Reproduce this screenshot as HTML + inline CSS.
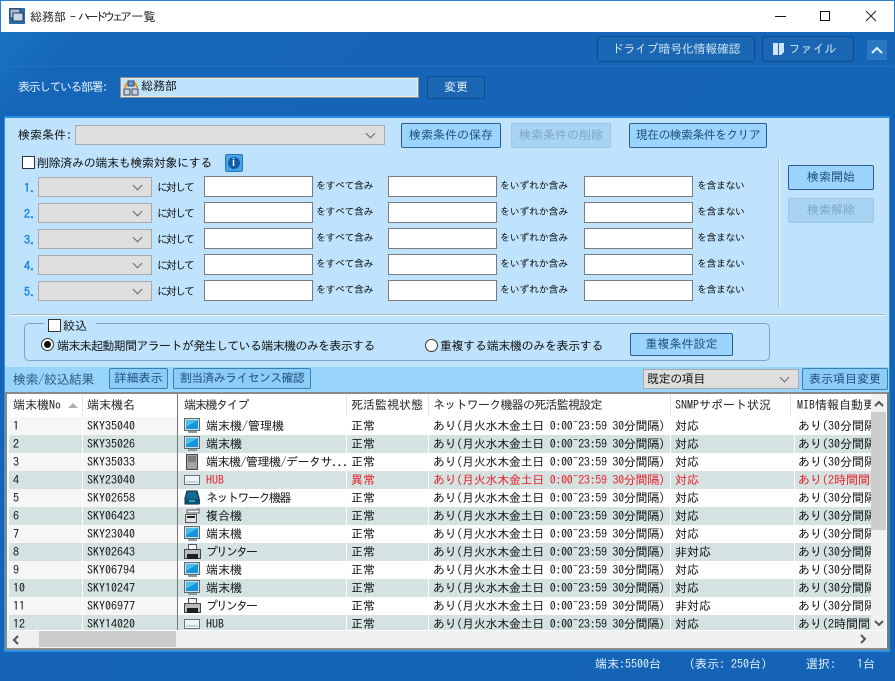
<!DOCTYPE html>
<html lang="ja"><head><meta charset="utf-8"><title>総務部 - ハードウェア一覧</title>
<style>
html,body{margin:0;padding:0;width:895px;height:681px;overflow:hidden;background:#1565b8}
*{box-sizing:border-box}
body{font:12px/14px "IPAGothic","Noto Sans CJK JP",sans-serif;color:#111;position:relative}
.a,.a *{position:absolute}
.a{left:0;top:0;width:895px;height:681px;background:linear-gradient(135deg,#1a78c8 0,#1565b8 8%,#1463b6 100%)}
.t{white-space:nowrap}
.a .t span{position:static}
.btn{border:1px solid #2c5d8e;border-radius:2px;background:#9bd4fd;color:#1f4e7c;text-align:center;font-size:12px;white-space:nowrap;line-height:23px}
.off{border-color:#9cc6e6;background:#a9d3f3;color:#7fa5c4}
.dk{border:1px solid #0e4a8c;border-radius:3px;background:#1a66b2;color:#cfe3f5;text-align:center;font-size:12px;line-height:23px;white-space:nowrap}
.sel{border:1px solid #a9a9a9;background:#dedede}
.sel:after{content:"";position:absolute;right:10px;top:4px;width:6px;height:6px;border-right:1px solid #666;border-bottom:1px solid #666;transform:rotate(45deg)}
.in{border:1px solid #7b7b7b;background:#fff;width:109px;height:21px}
.num{color:#1e88e8;font-weight:bold;font-size:12px}
.u{font-size:11px;letter-spacing:-2px}
.v,.w,.y{font-size:10px;color:#111}
.v{letter-spacing:-.5px}.w{letter-spacing:-.3px}.y{letter-spacing:-.5px}
.r{left:9px;width:862px;height:18px;overflow:hidden;background:#fff}
.r.e{background:#d5e2e2}
.r span{top:2px;white-space:nowrap;color:#111}
.r span:nth-of-type(5){letter-spacing:-.3px}
.r b{top:0;height:18px;width:1px;background:#fff}
.r .f{left:0;top:0;width:168px;height:18px;background:#f6f6f6}
.r.e .f{background:#d5e2e2}
.r.red span{color:#e8202a}
.r svg{left:175px;top:1px;width:17px;height:16px}
.h{top:398px;white-space:nowrap;color:#222}
.hd{top:394px;width:1px;height:22px;background:#e4e4e4}
</style></head><body><div class="a">
<svg width="0" height="0" style="position:absolute"><defs>
<symbol id="m" viewBox="0 0 17 16"><rect x=".5" y=".5" width="15" height="12" fill="#d4dcdf" stroke="#5a6a72"/><rect x="2" y="2" width="12" height="9" fill="#1496dc"/><path d="M2 2h12L2 9z" fill="#4cbcec"/><rect x="4" y="13" width="9" height="2" fill="#8e9ca0"/></symbol>
<symbol id="s" viewBox="0 0 17 16"><rect x="2.5" y=".5" width="11" height="15" fill="#a4a4a4" stroke="#444"/><path d="M4 3h8M4 5h8M4 7h8" stroke="#555"/></symbol>
<symbol id="h" viewBox="0 0 17 16"><rect x=".5" y="3.5" width="15" height="9" fill="#eef3f5" stroke="#66767e"/><rect x="2" y="9" width="12" height="2" fill="#c8d4d8"/></symbol>
<symbol id="n" viewBox="0 0 17 16"><path d="M3 1h10l2 7v6H1V8z" fill="#0f6a94" stroke="#123"/><rect x="1" y="9" width="15" height="5" fill="#08506e"/><path d="M5 11h6" stroke="#6fd"/></symbol>
<symbol id="x" viewBox="0 0 17 16"><rect x="1.5" y="6.5" width="11" height="8" fill="#e4e4e4" stroke="#555"/><path d="M3 2h9l3-1v4H3z" fill="#f4f4f4" stroke="#555"/><path d="M3 9h8" stroke="#222" stroke-width="2"/></symbol>
<symbol id="p" viewBox="0 0 17 16"><rect x="4.5" y=".5" width="8" height="5" fill="#f2f2f2" stroke="#555"/><rect x=".5" y="5.5" width="16" height="9" fill="#b8bcbe" stroke="#444"/><rect x="3" y="10" width="11" height="5" fill="#1c2024"/></symbol>
</defs></svg>

<!-- title bar -->
<div style="left:0;top:0;width:895px;height:32px;background:#fff;border:1px solid #2a7fd0;border-bottom:0"></div>
<svg style="left:9px;top:8px" width="16" height="16" viewBox="0 0 16 16"><rect width="16" height="16" fill="#2c6ea8"/><rect x="1" y="1" width="10" height="9" fill="#a8bccc" stroke="#1e3c5c"/><rect x="4" y="5" width="10" height="8" fill="#c8d8e4" stroke="#1e3c5c"/></svg>
<div class="t" style="left:30px;top:10px;color:#222">総務部<span style="letter-spacing:-2px"> - </span><span style="letter-spacing:-3.6px">ハードウェア</span><span style="margin-left:3px">一覧</span></div>
<div style="left:775px;top:16px;width:11px;height:1px;background:#111"></div>
<div style="left:820px;top:11px;width:10px;height:10px;border:1px solid #111"></div>
<svg style="left:865px;top:10px" width="12" height="12" viewBox="0 0 12 12"><path d="M1 1l10 10M11 1L1 11" stroke="#222" fill="none"/></svg>

<!-- blue header -->
<div style="left:1px;top:66px;width:893px;height:1px;background:#2272c4"></div>
<div class="dk" style="left:597px;top:36px;width:158px;height:26px;line-height:25px;letter-spacing:-.3px">ドライブ暗号化情報確認</div>
<div class="dk" style="left:762px;top:36px;width:92px;height:26px;line-height:25px;padding-left:9px">ファイル</div>
<svg style="left:772px;top:42px" width="13" height="14" viewBox="0 0 13 14"><path d="M1 1h5v12H1zM7 1h5v9L9 13H7z" fill="#cfe6f8"/></svg>
<div style="left:866px;top:39px;width:22px;height:22px;background:#2a78c4;border:1px solid #1c62a8"></div>
<svg style="left:871px;top:46px" width="12" height="8" viewBox="0 0 12 8"><path d="M1 7l5-5 5 5" stroke="#e8f4fc" stroke-width="2" fill="none"/></svg>
<div class="t" style="left:18px;top:80px;color:#e4f2fc;letter-spacing:-1.5px">表示している部署:</div>
<div style="left:120px;top:77px;width:299px;height:21px;background:#bfe3fd;border:1px solid #8c8c8c;outline:1px solid #e8e8e8;outline-offset:-2px"></div>
<svg style="left:123px;top:80px" width="16" height="16" viewBox="0 0 16 16"><path d="M2 8a6 6 0 0 1 12 0" stroke="#e89a20" stroke-width="2" fill="none"/><rect x="5" y="1" width="6" height="5" fill="#5c9ce0" stroke="#445"/><rect x="1" y="9" width="6" height="6" fill="#cbd4dc" stroke="#445"/><rect x="9" y="9" width="6" height="6" fill="#cbd4dc" stroke="#445"/></svg>
<div class="t" style="left:141px;top:79px">総務部</div>
<div class="dk" style="left:427px;top:76px;width:58px;height:23px;line-height:21px;color:#e8f4fc">変更</div>

<!-- light panel -->
<div style="left:4px;top:116px;width:886px;height:535px;background:#bfe3fd;border-top:2px solid #2a90e4;border-left:1px solid #2a90e4;border-right:1px solid #2a90e4"></div>
<div class="t" style="left:18px;top:128px">検索条件:</div>
<div class="sel" style="left:75px;top:125px;width:310px;height:20px"></div>
<div class="btn" style="left:401px;top:123px;width:100px;height:25px">検索条件の保存</div>
<div class="btn off" style="left:511px;top:123px;width:100px;height:25px">検索条件の削除</div>
<div class="btn" style="left:629px;top:123px;width:138px;height:25px;letter-spacing:-.7px">現在の検索条件をクリア</div>

<div style="left:22px;top:156px;width:13px;height:13px;background:#fff;border:1px solid #333"></div>
<div class="t" style="left:37px;top:156px;letter-spacing:-.33px">削除済みの端末も検索対象にする</div>
<div style="left:225px;top:154px;width:18px;height:18px;background:#48a4e8;border:1px solid #2878b8;border-radius:2px"></div>
<div style="left:228px;top:157px;width:12px;height:12px;background:#0f5ca4;border-radius:50%"></div>
<div class="t" style="left:232px;top:157px;color:#fff;font:bold 11px/12px 'Liberation Sans',sans-serif">i</div>

<div class="num t" style="left:24px;top:181px">1.</div><div class="sel" style="left:38px;top:177px;width:114px;height:20px"></div><div class="t u" style="left:157px;top:181px">に対して</div><div class="in" style="left:204px;top:176px"></div><div class="t v" style="left:316px;top:179px">をすべて含み</div><div class="in" style="left:388px;top:176px"></div><div class="t w" style="left:500px;top:179px">をいずれか含み</div><div class="in" style="left:584px;top:176px"></div><div class="t y" style="left:697px;top:179px">を含まない</div>
<div class="num t" style="left:24px;top:207px">2.</div><div class="sel" style="left:38px;top:203px;width:114px;height:20px"></div><div class="t u" style="left:157px;top:207px">に対して</div><div class="in" style="left:204px;top:202px"></div><div class="t v" style="left:316px;top:205px">をすべて含み</div><div class="in" style="left:388px;top:202px"></div><div class="t w" style="left:500px;top:205px">をいずれか含み</div><div class="in" style="left:584px;top:202px"></div><div class="t y" style="left:697px;top:205px">を含まない</div>
<div class="num t" style="left:24px;top:233px">3.</div><div class="sel" style="left:38px;top:229px;width:114px;height:20px"></div><div class="t u" style="left:157px;top:233px">に対して</div><div class="in" style="left:204px;top:228px"></div><div class="t v" style="left:316px;top:231px">をすべて含み</div><div class="in" style="left:388px;top:228px"></div><div class="t w" style="left:500px;top:231px">をいずれか含み</div><div class="in" style="left:584px;top:228px"></div><div class="t y" style="left:697px;top:231px">を含まない</div>
<div class="num t" style="left:24px;top:259px">4.</div><div class="sel" style="left:38px;top:255px;width:114px;height:20px"></div><div class="t u" style="left:157px;top:259px">に対して</div><div class="in" style="left:204px;top:254px"></div><div class="t v" style="left:316px;top:257px">をすべて含み</div><div class="in" style="left:388px;top:254px"></div><div class="t w" style="left:500px;top:257px">をいずれか含み</div><div class="in" style="left:584px;top:254px"></div><div class="t y" style="left:697px;top:257px">を含まない</div>
<div class="num t" style="left:24px;top:285px">5.</div><div class="sel" style="left:38px;top:281px;width:114px;height:20px"></div><div class="t u" style="left:157px;top:285px">に対して</div><div class="in" style="left:204px;top:280px"></div><div class="t v" style="left:316px;top:283px">をすべて含み</div><div class="in" style="left:388px;top:280px"></div><div class="t w" style="left:500px;top:283px">をいずれか含み</div><div class="in" style="left:584px;top:280px"></div><div class="t y" style="left:697px;top:283px">を含まない</div>

<div style="left:778px;top:158px;width:1px;height:149px;background:#a8b8c4;box-shadow:1px 0 #eef6fc"></div>
<div class="btn" style="left:788px;top:165px;width:86px;height:25px;line-height:23px">検索開始</div>
<div class="btn off" style="left:788px;top:198px;width:86px;height:25px;line-height:23px">検索解除</div>
<div style="left:10px;top:314px;width:875px;height:1px;background:#a8b8c4;box-shadow:0 1px #eef6fc"></div>

<!-- filter -->
<div style="left:24px;top:323px;width:746px;height:38px;border:1px solid #7ba4c4;border-radius:5px"></div>
<div style="left:44px;top:318px;width:52px;height:14px;background:#bfe3fd"></div>
<div style="left:48px;top:319px;width:13px;height:13px;background:#fff;border:1px solid #333"></div>
<div class="t" style="left:63px;top:319px">絞込</div>
<div style="left:41px;top:338px;width:13px;height:13px;background:#fff;border:1px solid #333;border-radius:50%"></div>
<div style="left:44px;top:341px;width:7px;height:7px;background:#111;border-radius:50%"></div>
<div class="t" style="left:57px;top:339px;letter-spacing:-.65px">端末未起動期間アラートが発生している端末機のみを表示する</div>
<div style="left:425px;top:339px;width:13px;height:13px;background:#fff;border:1px solid #333;border-radius:50%"></div>
<div class="t" style="left:440px;top:339px;letter-spacing:-.35px">重複する端末機のみを表示する</div>
<div class="btn" style="left:630px;top:333px;width:103px;height:23px;line-height:21px">重複条件設定</div>

<!-- results bar -->
<div style="left:5px;top:367px;width:884px;height:26px;background:#99d5fb"></div>
<div class="t" style="left:13px;top:373px;font-size:13px;color:#2c5a80;letter-spacing:-.5px">検索/絞込結果</div>
<div class="btn" style="left:109px;top:368px;width:59px;height:21px;line-height:19px;background:#8ccdf8;border-color:#3880b8">詳細表示</div>
<div class="btn" style="left:173px;top:368px;width:138px;height:21px;line-height:19px;background:#8ccdf8;border-color:#3880b8;letter-spacing:-.7px">割当済みライセンス確認</div>
<div class="sel" style="left:643px;top:369px;width:156px;height:20px;background:#dedede"></div>
<div class="t" style="left:647px;top:372px;letter-spacing:-.4px">既定の項目</div>
<div class="btn" style="left:802px;top:368px;width:86px;height:22px;line-height:20px;background:#8ccdf8;border-color:#3880b8">表示項目変更</div>

<!-- table -->
<div style="left:5px;top:392px;width:884px;height:258px;background:#fff;border:2px solid #8a8a8a;border-right-color:#777"></div>
<div class="h" style="left:13px">端末機No</div>
<svg style="left:67px;top:402px" width="12" height="7" viewBox="0 0 12 7"><path d="M1 6l5-5 5 5z" fill="#b0b0b0"/></svg>
<div class="h" style="left:87px">端末機名</div>
<div class="h" style="left:184px;letter-spacing:-1.3px">端末機タイプ</div>
<div class="h" style="left:351px">死活監視状態</div>
<div class="h" style="left:433px;letter-spacing:-.75px">ネットワーク機器の死活監視設定</div>
<div class="h" style="left:675px">SNMPサポート状況</div>
<div class="h" style="left:797px;width:74px;overflow:hidden">MIB情報自動更新</div>
<div class="hd" style="left:82px"></div><div class="hd" style="left:346px"></div><div class="hd" style="left:428px"></div><div class="hd" style="left:670px"></div><div class="hd" style="left:790px"></div>

<div class="r" style="top:417px"><i class="f"></i><span style="left:4px">1</span><span style="left:78px">SKY35040</span><svg><use href="#m"/></svg><span style="left:197px">端末機/管理機</span><span style="left:342px">正常</span><span style="left:424px">あり(月火水木金土日 0:00~23:59 30分間隔)</span><span style="left:666px">対応</span><span style="left:789px">あり(30分間隔</span><b style="left:73px"></b><b style="left:337px"></b><b style="left:419px"></b><b style="left:661px"></b><b style="left:785px"></b></div>
<div class="r e" style="top:435px"><i class="f"></i><span style="left:4px">2</span><span style="left:78px">SKY35026</span><svg><use href="#m"/></svg><span style="left:197px">端末機</span><span style="left:342px">正常</span><span style="left:424px">あり(月火水木金土日 0:00~23:59 30分間隔)</span><span style="left:666px">対応</span><span style="left:789px">あり(30分間隔</span><b style="left:73px"></b><b style="left:337px"></b><b style="left:419px"></b><b style="left:661px"></b><b style="left:785px"></b></div>
<div class="r" style="top:453px"><i class="f"></i><span style="left:4px">3</span><span style="left:78px">SKY35033</span><svg><use href="#s"/></svg><span style="left:197px;letter-spacing:-.5px">端末機/管理機/データサ...</span><span style="left:342px">正常</span><span style="left:424px">あり(月火水木金土日 0:00~23:59 30分間隔)</span><span style="left:666px">対応</span><span style="left:789px">あり(30分間隔</span><b style="left:73px"></b><b style="left:337px"></b><b style="left:419px"></b><b style="left:661px"></b><b style="left:785px"></b></div>
<div class="r e red" style="top:471px"><i class="f"></i><span style="left:4px;color:#111">4</span><span style="left:78px;color:#111">SKY23040</span><svg><use href="#h"/></svg><span style="left:197px">HUB</span><span style="left:342px">異常</span><span style="left:424px">あり(月火水木金土日 0:00~23:59 30分間隔)</span><span style="left:666px">対応</span><span style="left:789px">あり(2時間間隔</span><b style="left:73px"></b><b style="left:337px"></b><b style="left:419px"></b><b style="left:661px"></b><b style="left:785px"></b></div>
<div class="r" style="top:489px"><i class="f"></i><span style="left:4px">5</span><span style="left:78px">SKY02658</span><svg><use href="#n"/></svg><span style="left:197px;letter-spacing:-1.5px">ネットワーク機器</span><span style="left:342px">正常</span><span style="left:424px">あり(月火水木金土日 0:00~23:59 30分間隔)</span><span style="left:666px">対応</span><span style="left:789px">あり(30分間隔</span><b style="left:73px"></b><b style="left:337px"></b><b style="left:419px"></b><b style="left:661px"></b><b style="left:785px"></b></div>
<div class="r e" style="top:507px"><i class="f"></i><span style="left:4px">6</span><span style="left:78px">SKY06423</span><svg><use href="#x"/></svg><span style="left:197px">複合機</span><span style="left:342px">正常</span><span style="left:424px">あり(月火水木金土日 0:00~23:59 30分間隔)</span><span style="left:666px">対応</span><span style="left:789px">あり(30分間隔</span><b style="left:73px"></b><b style="left:337px"></b><b style="left:419px"></b><b style="left:661px"></b><b style="left:785px"></b></div>
<div class="r" style="top:525px"><i class="f"></i><span style="left:4px">7</span><span style="left:78px">SKY23040</span><svg><use href="#m"/></svg><span style="left:197px">端末機</span><span style="left:342px">正常</span><span style="left:424px">あり(月火水木金土日 0:00~23:59 30分間隔)</span><span style="left:666px">対応</span><span style="left:789px">あり(30分間隔</span><b style="left:73px"></b><b style="left:337px"></b><b style="left:419px"></b><b style="left:661px"></b><b style="left:785px"></b></div>
<div class="r e" style="top:543px"><i class="f"></i><span style="left:4px">8</span><span style="left:78px">SKY02643</span><svg><use href="#p"/></svg><span style="left:197px;letter-spacing:-2px">プリンター</span><span style="left:342px">正常</span><span style="left:424px">あり(月火水木金土日 0:00~23:59 30分間隔)</span><span style="left:666px">非対応</span><span style="left:789px">あり(30分間隔</span><b style="left:73px"></b><b style="left:337px"></b><b style="left:419px"></b><b style="left:661px"></b><b style="left:785px"></b></div>
<div class="r" style="top:561px"><i class="f"></i><span style="left:4px">9</span><span style="left:78px">SKY06794</span><svg><use href="#m"/></svg><span style="left:197px">端末機</span><span style="left:342px">正常</span><span style="left:424px">あり(月火水木金土日 0:00~23:59 30分間隔)</span><span style="left:666px">対応</span><span style="left:789px">あり(30分間隔</span><b style="left:73px"></b><b style="left:337px"></b><b style="left:419px"></b><b style="left:661px"></b><b style="left:785px"></b></div>
<div class="r e" style="top:579px"><i class="f"></i><span style="left:4px">10</span><span style="left:78px">SKY10247</span><svg><use href="#m"/></svg><span style="left:197px">端末機</span><span style="left:342px">正常</span><span style="left:424px">あり(月火水木金土日 0:00~23:59 30分間隔)</span><span style="left:666px">対応</span><span style="left:789px">あり(30分間隔</span><b style="left:73px"></b><b style="left:337px"></b><b style="left:419px"></b><b style="left:661px"></b><b style="left:785px"></b></div>
<div class="r" style="top:597px"><i class="f"></i><span style="left:4px">11</span><span style="left:78px">SKY06977</span><svg><use href="#p"/></svg><span style="left:197px;letter-spacing:-2px">プリンター</span><span style="left:342px">正常</span><span style="left:424px">あり(月火水木金土日 0:00~23:59 30分間隔)</span><span style="left:666px">非対応</span><span style="left:789px">あり(30分間隔</span><b style="left:73px"></b><b style="left:337px"></b><b style="left:419px"></b><b style="left:661px"></b><b style="left:785px"></b></div>
<div class="r e" style="top:615px;height:15px"><i class="f"></i><span style="left:4px">12</span><span style="left:78px">SKY14020</span><svg><use href="#h"/></svg><span style="left:197px">HUB</span><span style="left:342px">正常</span><span style="left:424px">あり(月火水木金土日 0:00~23:59 30分間隔)</span><span style="left:666px">対応</span><span style="left:789px">あり(2時間間隔</span><b style="left:73px"></b><b style="left:337px"></b><b style="left:419px"></b><b style="left:661px"></b><b style="left:785px"></b></div>

<div style="left:177px;top:394px;width:1px;height:236px;background:#777"></div>

<!-- scrollbars -->
<div style="left:871px;top:394px;width:15px;height:236px;background:#f0f0f0"></div>
<div style="left:871px;top:412px;width:15px;height:118px;background:#cdcdcd"></div>
<svg style="left:874px;top:400px" width="10" height="7" viewBox="0 0 10 7"><path d="M1 6l4-4 4 4" stroke="#555" stroke-width="2" fill="none"/></svg>
<svg style="left:874px;top:620px" width="10" height="7" viewBox="0 0 10 7"><path d="M1 1l4 4 4-4" stroke="#555" stroke-width="2" fill="none"/></svg>
<div style="left:7px;top:631px;width:879px;height:17px;background:#f0f0f0"></div>
<div style="left:39px;top:631px;width:137px;height:16px;background:#cbcbcb"></div>
<svg style="left:12px;top:635px" width="7" height="10" viewBox="0 0 7 10"><path d="M6 1L2 5l4 4" stroke="#555" stroke-width="2" fill="none"/></svg>
<svg style="left:860px;top:634px" width="7" height="10" viewBox="0 0 7 10"><path d="M1 1l4 4-4 4" stroke="#555" stroke-width="2" fill="none"/></svg>

<!-- status bar -->
<div style="left:4px;top:650px;width:886px;height:2px;background:#2a90e4"></div>
<div class="t" style="left:595px;top:657px;color:#e4f2fc">端末:5500台</div>
<div class="t" style="left:689px;top:657px;color:#e4f2fc">(表示:  250台)</div>
<div class="t" style="left:806px;top:657px;color:#e4f2fc">選択:</div>
<div class="t" style="left:857px;top:657px;color:#e4f2fc">1台</div>
</div></body></html>
